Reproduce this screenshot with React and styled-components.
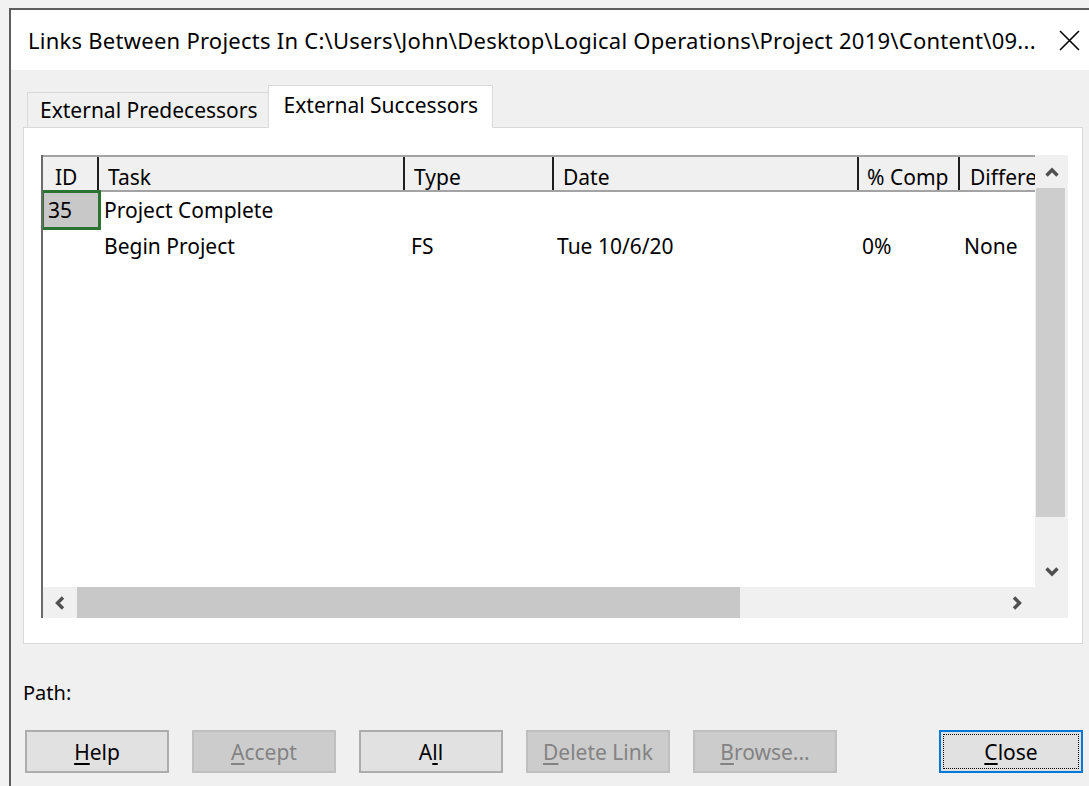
import styled, { createGlobalStyle } from "styled-components";

const GlobalStyle = createGlobalStyle`
  html, body {
    margin: 0;
    padding: 0;
    background: #f2f2f2;
  }
  body {
    font-family: "Noto Sans", "Open Sans", sans-serif;
    color: #000;
  }
  * {
    box-sizing: border-box;
  }
`;

const Window = styled.div`
  margin: 8px 0 0 9px;
  height: 778px;
  border-top: 2px solid #5e5e5e;
  border-left: 2px solid #5e5e5e;
  background: #f0f0f0;
  display: flex;
  flex-direction: column;
  overflow: hidden;
`;

const TitleBar = styled.div`
  height: 60px;
  flex-shrink: 0;
  background: #fff;
  display: flex;
  align-items: center;
  padding-left: 17px;
`;

const Title = styled.div`
  flex: 1;
  font-size: 22px;
  letter-spacing: 0.25px;
  white-space: nowrap;
  overflow: hidden;
`;

const CloseX = styled.div`
  width: 44px;
  display: flex;
  align-items: center;
  padding-left: 14px;
`;

const Body = styled.div`
  flex: 1;
  display: flex;
  flex-direction: column;
  padding: 15px 6px 0 12px;
`;

const TabStrip = styled.div`
  display: flex;
  align-items: flex-end;
  padding-left: 4px;
  height: 43px;
  margin-bottom: -1px;
  position: relative;
  z-index: 1;
`;

const Tab = styled.div`
  height: ${(p) => (p.$active ? "43px" : "36px")};
  padding: ${(p) => (p.$active ? "0 14px 4px 15px" : "0 10px 0 12px")};
  margin-left: ${(p) => (p.$active ? "-1px" : "0")};
  background: ${(p) => (p.$active ? "#fff" : "#f0f0f0")};
  border: 1px solid #d9d9d9;
  border-bottom-color: ${(p) => (p.$active ? "#fff" : "#d9d9d9")};
  font-size: 21px;
  display: flex;
  align-items: center;
  white-space: nowrap;
`;

const Panel = styled.div`
  height: 517px;
  background: #fff;
  border: 1px solid #d9d9d9;
  padding: 27px 14px 25px 17px;
`;

const TableFrame = styled.div`
  height: 463px;
  display: grid;
  grid-template-columns: 1fr 33px;
  grid-template-rows: 1fr 31px;
  border-left: 2px solid #6a6a6a;
`;

const Viewport = styled.div`
  overflow: hidden;
  background: #fff;
`;

const HeaderRow = styled.div`
  display: flex;
  height: 37px;
  background: #f0f0f0;
  border-top: 2px solid #a3a3a3;
  border-bottom: 2px solid #a3a3a3;
  white-space: nowrap;
`;

const HeaderCell = styled.div`
  flex: 0 0 ${(p) => p.$w}px;
  padding: 6px 0 0 ${(p) => p.$pad ?? 9}px;
  font-size: 21px;
  border-right: 2px solid #1e1e1e;
  overflow: hidden;
  display: flex;
  align-items: center;
`;

const Row = styled.div`
  display: flex;
  height: 36px;
  white-space: nowrap;
`;

const Cell = styled.div`
  flex: 0 0 ${(p) => p.$w}px;
  padding-left: ${(p) => p.$pad ?? 5}px;
  font-size: 21px;
  display: flex;
  align-items: center;
  overflow: hidden;
`;

const IdCell = styled(Cell)`
  background: ${(p) => (p.$selected ? "#c8c8c8" : "transparent")};
  outline: ${(p) => (p.$selected ? "3px solid #2b7330" : "none")};
  outline-offset: -1px;
`;

const VScroll = styled.div`
  grid-column: 2;
  grid-row: 1 / span 2;
  background: #f0f0f0;
  display: flex;
  flex-direction: column;
`;

const HScroll = styled.div`
  grid-column: 1;
  grid-row: 2;
  background: #f0f0f0;
  display: flex;
`;

const ArrowButton = styled.div`
  flex: 0 0 ${(p) => p.$size}px;
  display: flex;
  align-items: center;
  justify-content: center;
`;

const VThumb = styled.div`
  flex: 0 0 329px;
  margin: 0 3px 0 1px;
  background: #cdcdcd;
`;

const HThumb = styled.div`
  flex: 0 0 663px;
  background: #c8c8c8;
`;

const Spacer = styled.div`
  flex: 1;
`;

const PathLabel = styled.div`
  margin-top: 37px;
  font-size: 20px;
  line-height: 24px;
`;

const ButtonRow = styled.div`
  display: flex;
  gap: 23px;
  margin-top: 25px;
  padding-left: 2px;
`;

const Button = styled.div`
  width: 144px;
  height: 43px;
  flex-shrink: 0;
  display: flex;
  align-items: center;
  justify-content: center;
  font-size: 21px;
  background: ${(p) => (p.$disabled ? "#cccccc" : "#e1e1e1")};
  color: ${(p) => (p.$disabled ? "#838383" : "#000")};
  border: 2px solid ${(p) => (p.$focused ? "#0078d7" : p.$disabled ? "#bfbfbf" : "#adadad")};
  margin-left: ${(p) => (p.$push ? "auto" : "0")};
  position: relative;

  ${(p) =>
    p.$focused &&
    `
    &::after {
      content: "";
      position: absolute;
      inset: 2px;
      border: 1px dotted #000;
    }
  `}
`;

const Key = styled.span`
  text-decoration: underline;
  text-underline-offset: 3px;
`;

const Chevron = ({ dir }) => {
  const pts = {
    up: "1.5,10.5 7,5 12.5,10.5",
    down: "1.5,4.5 7,10 12.5,4.5",
    left: "10,1.5 4.5,7 10,12.5",
    right: "4,1.5 9.5,7 4,12.5",
  }[dir];
  return (
    <svg width="14" height="14" viewBox="0 0 14 14">
      <polyline points={pts} fill="none" stroke="#505050" strokeWidth="3.4" />
    </svg>
  );
};

const columns = [
  { key: "id", label: "ID", w: 56, pad: 12 },
  { key: "task", label: "Task", w: 306 },
  { key: "type", label: "Type", w: 149 },
  { key: "date", label: "Date", w: 305 },
  { key: "comp", label: "% Comp", w: 101, pad: 8 },
  { key: "diff", label: "Difference", w: 120, pad: 10 },
];

const rows = [
  { id: "35", task: "Project Complete", type: "", date: "", comp: "", diff: "", selected: true },
  { id: "", task: "Begin Project", type: "FS", date: "Tue 10/6/20", comp: "0%", diff: "None" },
];

const bodyPad = { task: 5, type: 6, date: 3, comp: 3, diff: 4 };

const App = () => {
  return (
    <>
      <GlobalStyle />
      <Window>
        <TitleBar>
          <Title>
            Links Between Projects In C:\Users\John\Desktop\Logical Operations\Project
            2019\Content\09...
          </Title>
          <CloseX>
            <svg width="21" height="21" viewBox="0 0 21 21">
              <path d="M1 1 L20 20 M20 1 L1 20" stroke="#000" strokeWidth="1.6" />
            </svg>
          </CloseX>
        </TitleBar>

        <Body>
          <TabStrip>
            <Tab>External Predecessors</Tab>
            <Tab $active>External Successors</Tab>
          </TabStrip>

          <Panel>
            <TableFrame>
              <Viewport>
                <HeaderRow>
                  {columns.map((c) => (
                    <HeaderCell key={c.key} $w={c.w} $pad={c.pad}>
                      {c.label}
                    </HeaderCell>
                  ))}
                </HeaderRow>
                {rows.map((r, i) => (
                  <Row key={i}>
                    <IdCell $w={56} $pad={5} $selected={r.selected}>
                      {r.id}
                    </IdCell>
                    {columns.slice(1).map((c) => (
                      <Cell key={c.key} $w={c.w} $pad={bodyPad[c.key]}>
                        {r[c.key]}
                      </Cell>
                    ))}
                  </Row>
                ))}
              </Viewport>

              <VScroll>
                <ArrowButton $size={33}>
                  <Chevron dir="up" />
                </ArrowButton>
                <VThumb />
                <Spacer />
                <ArrowButton $size={33}>
                  <Chevron dir="down" />
                </ArrowButton>
                <ArrowButton $size={31} />
              </VScroll>

              <HScroll>
                <ArrowButton $size={34}>
                  <Chevron dir="left" />
                </ArrowButton>
                <HThumb />
                <Spacer />
                <ArrowButton $size={36}>
                  <Chevron dir="right" />
                </ArrowButton>
              </HScroll>
            </TableFrame>
          </Panel>

          <PathLabel>Path:</PathLabel>

          <ButtonRow>
            <Button>
              <span>
                <Key>H</Key>elp
              </span>
            </Button>
            <Button $disabled>
              <span>
                <Key>A</Key>ccept
              </span>
            </Button>
            <Button>
              <span>
                A<Key>l</Key>l
              </span>
            </Button>
            <Button $disabled>
              <span>
                <Key>D</Key>elete Link
              </span>
            </Button>
            <Button $disabled>
              <span>
                <Key>B</Key>rowse...
              </span>
            </Button>
            <Button $focused $push>
              <span>
                <Key>C</Key>lose
              </span>
            </Button>
          </ButtonRow>
        </Body>
      </Window>
    </>
  );
};

export default App;
